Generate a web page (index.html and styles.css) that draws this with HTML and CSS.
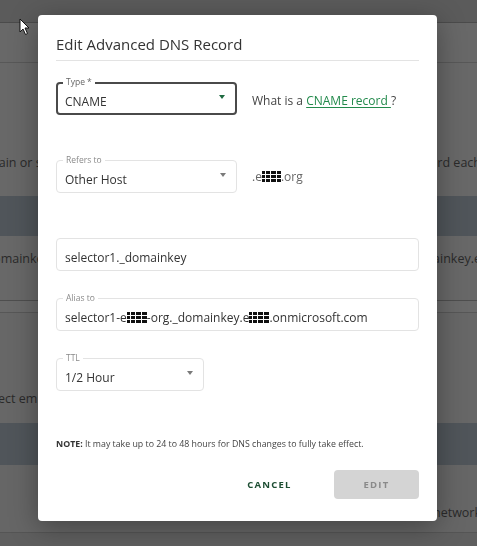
FILE: index.html
```html
<!DOCTYPE html>
<html>
<head>
<meta charset="utf-8">
<title>Edit Advanced DNS Record</title>
<link rel="stylesheet" href="styles.css">
</head>
<body>
<div class="page">
  <div class="bg-top"></div>
  <div class="bg-row bg-r1"></div>
  <div class="bg-row bg-r2"><span class="bg-left">domain or s</span><span class="bg-right">record each</span></div>
  <div class="bg-band"></div>
  <div class="bg-row bg-r3"><span class="bg-left">_domainkey</span><span class="bg-right">domainkey.e</span></div>
  <div class="bg-row bg-r4"></div>
  <div class="bg-row bg-r5"><span class="bg-left">redirect em</span><span class="bg-right"></span></div>
  <div class="bg-band bg-band2"></div>
  <div class="bg-row bg-r6"><span class="bg-left"></span><span class="bg-right">networks</span></div>
  <div class="bg-rest"></div>
</div>

<div class="overlay">
  <div class="modal">
    <h1 class="title">Edit Advanced DNS Record</h1>
    <div class="divider"></div>

    <div class="row row-type">
      <div class="field field-focused field-half">
        <span class="label">Type *</span>
        <span class="value">CNAME</span>
        <span class="caret caret-green"></span>
      </div>
      <span class="aside">What is a <a class="link" href="#">CNAME record </a>?</span>
    </div>

    <div class="row row-refers">
      <div class="field field-half">
        <span class="label">Refers to</span>
        <span class="value">Other Host</span>
        <span class="caret"></span>
      </div>
      <span class="aside aside-muted">.e<span class="redact redact-a"></span>.org</span>
    </div>

    <div class="row row-host">
      <div class="field field-full">
        <span class="value">selector1._domainkey</span>
      </div>
    </div>

    <div class="row row-alias">
      <div class="field field-full">
        <span class="label">Alias to</span>
        <span class="value">selector1-e<span class="redact redact-b"></span>-org._domainkey.e<span class="redact redact-c"></span>.onmicrosoft.com</span>
      </div>
    </div>

    <div class="row row-ttl">
      <div class="field field-ttl">
        <span class="label">TTL</span>
        <span class="value">1/2 Hour</span>
        <span class="caret"></span>
      </div>
    </div>

    <p class="note"><b>NOTE:</b> It may take up to 24 to 48 hours for DNS changes to fully take effect.</p>

    <div class="actions">
      <button class="btn btn-cancel">CANCEL</button>
      <button class="btn btn-edit">EDIT</button>
    </div>
  </div>
</div>

<svg class="cursor" width="12" height="18" viewBox="0 0 12 18">
  <path d="M1 1 L1 14 L4 11 L6.5 16.5 L8.5 15.5 L6 10 L10 10 Z" fill="#fff" stroke="#111" stroke-width="1" stroke-linejoin="round"/>
</svg>
</body>
</html>
```

FILE: styles.css
```css
* { box-sizing: border-box; }

html, body {
  margin: 0;
  padding: 0;
  width: 477px;
  height: 546px;
  overflow: hidden;
  background: #5f5f5f;
  font-family: "Open Sans", "Liberation Sans", sans-serif;
}

/* ---------- dimmed background page ---------- */
.page {
  display: flex;
  flex-direction: column;
  height: 546px;
  color: #2a2a2a;
  font-size: 12.5px;
}
.bg-top {
  height: 23px;
  background: #5b5b5b;
  border-bottom: 1px solid #4b4b4b;
}
.bg-row {
  display: flex;
  justify-content: space-between;
  align-items: center;
  background: #686868;
  white-space: nowrap;
  overflow: hidden;
}
.bg-r1 { height: 40px; border-bottom: 1px solid #585858; }
.bg-r2 { height: 133px; padding-top: 66px; }
.bg-r2 .bg-left { margin-left: -28px; }
.bg-r2 .bg-right { margin-right: -4px; }
.bg-band { height: 40px; background: #50555a; }
.bg-r3 { height: 65px; padding-bottom: 20px; border-bottom: 1px solid #4e4e4e; }
.bg-r3 .bg-left { margin-left: -20px; }
.bg-r3 .bg-right { margin-right: -4px; }
.bg-r4 { height: 12px; border-bottom: 1px solid #575757; background: #6a6a6a; }
.bg-r5 { height: 110px; padding-top: 60px; background: #676767; }
.bg-r5 .bg-left { margin-left: -30px; }
.bg-band2 { height: 42px; }
.bg-r6 { height: 68px; padding-top: 28px; border-bottom: 1px solid #555; background: #666; }
.bg-r6 .bg-right { margin-right: -10px; }
.bg-rest { flex: 1; background: #5f5f5f; }

/* ---------- overlay + modal ---------- */
.overlay {
  position: fixed;
  inset: 0;
  display: flex;
  align-items: flex-start;
  padding: 15px 0 0 38px;
}
.modal {
  width: 399px;
  height: 506px;
  background: #fff;
  border-radius: 4px;
  box-shadow: 0 6px 28px rgba(0, 0, 0, 0.35);
  padding: 18px 18px 22px 18px;
  display: flex;
  flex-direction: column;
}
.title {
  margin: 0;
  font-size: 15px;
  line-height: 22px;
  font-weight: 400;
  color: #333;
}
.divider {
  height: 1px;
  background: #e3e3e3;
  margin-top: 5px;
}

.row {
  display: flex;
  align-items: center;
  gap: 15px;
}
.row-type { margin-top: 21px; }
.row-refers { margin-top: 45px; }
.row-host { margin-top: 45px; }
.row-alias { margin-top: 27px; }
.row-ttl { margin-top: 27px; }

.field {
  position: relative;
  height: 33px;
  border: 1px solid #e3e3e3;
  border-radius: 4px;
  display: flex;
  align-items: center;
  padding: 6px 8px 0 8px;
  font-size: 12px;
  color: #333;
  white-space: nowrap;
}
.field-focused {
  border: 2px solid #4a4a4a;
  padding-left: 7px;
  padding-right: 7px;
}
.field-half { width: 181px; }
.field-full { width: 363px; }
.field-ttl { width: 148px; }

.label {
  position: absolute;
  top: -6px;
  left: 6px;
  padding: 0 3px;
  background: #fff;
  font-size: 8.5px;
  line-height: 10px;
  color: #8a8a8a;
}
.field-focused .label { top: -7px; left: 5px; color: #666; }

.value { display: inline-flex; align-items: center; }

.caret {
  margin-left: auto;
  margin-right: 2px;
  width: 0;
  height: 0;
  border-left: 3.5px solid transparent;
  border-right: 3.5px solid transparent;
  border-top: 4px solid #7a7a7a;
  margin-top: -10px;
}
.caret-green { border-top-color: #1e6a40; margin-right: 3px; }

.aside {
  font-size: 12px;
  color: #444;
  white-space: nowrap;
  margin-top: 4px;
}
.aside-muted { color: #666; margin-top: -1px; display: inline-flex; align-items: center; }
.link {
  color: #238a4c;
  text-decoration: underline;
  text-underline-offset: 2px;
}

.redact {
  display: inline-block;
  height: 11px;
  background:
    linear-gradient(90deg, transparent 0 3px, #fff 3px 4px, transparent 4px 8px, #fff 8px 9px, transparent 9px 14px, #fff 14px 15px, transparent 15px),
    linear-gradient(0deg, transparent 0 3px, #fff 3px 4px, transparent 4px 7px, #fff 7px 8px, transparent 8px),
    #111;
}
.redact-a { width: 19px; }
.redact-b { width: 20px; }
.redact-c { width: 20px; }

.note {
  margin: 47px 0 0 0;
  font-size: 8.8px;
  line-height: 12px;
  color: #444;
}
.note b { color: #333; }

.actions {
  margin-top: auto;
  display: flex;
  justify-content: flex-end;
  gap: 22px;
}
.btn {
  width: 85px;
  height: 29px;
  border: none;
  border-radius: 4px;
  font-family: "Open Sans", "Liberation Sans", sans-serif;
  font-size: 9.5px;
  font-weight: 700;
  letter-spacing: 1.2px;
  padding: 0;
}
.btn-cancel { background: transparent; color: #1d4e33; }
.btn-edit { background: #d4d4d4; color: #8a8a8a; }

.cursor {
  position: fixed;
  left: 19px;
  top: 18px;
}
```
